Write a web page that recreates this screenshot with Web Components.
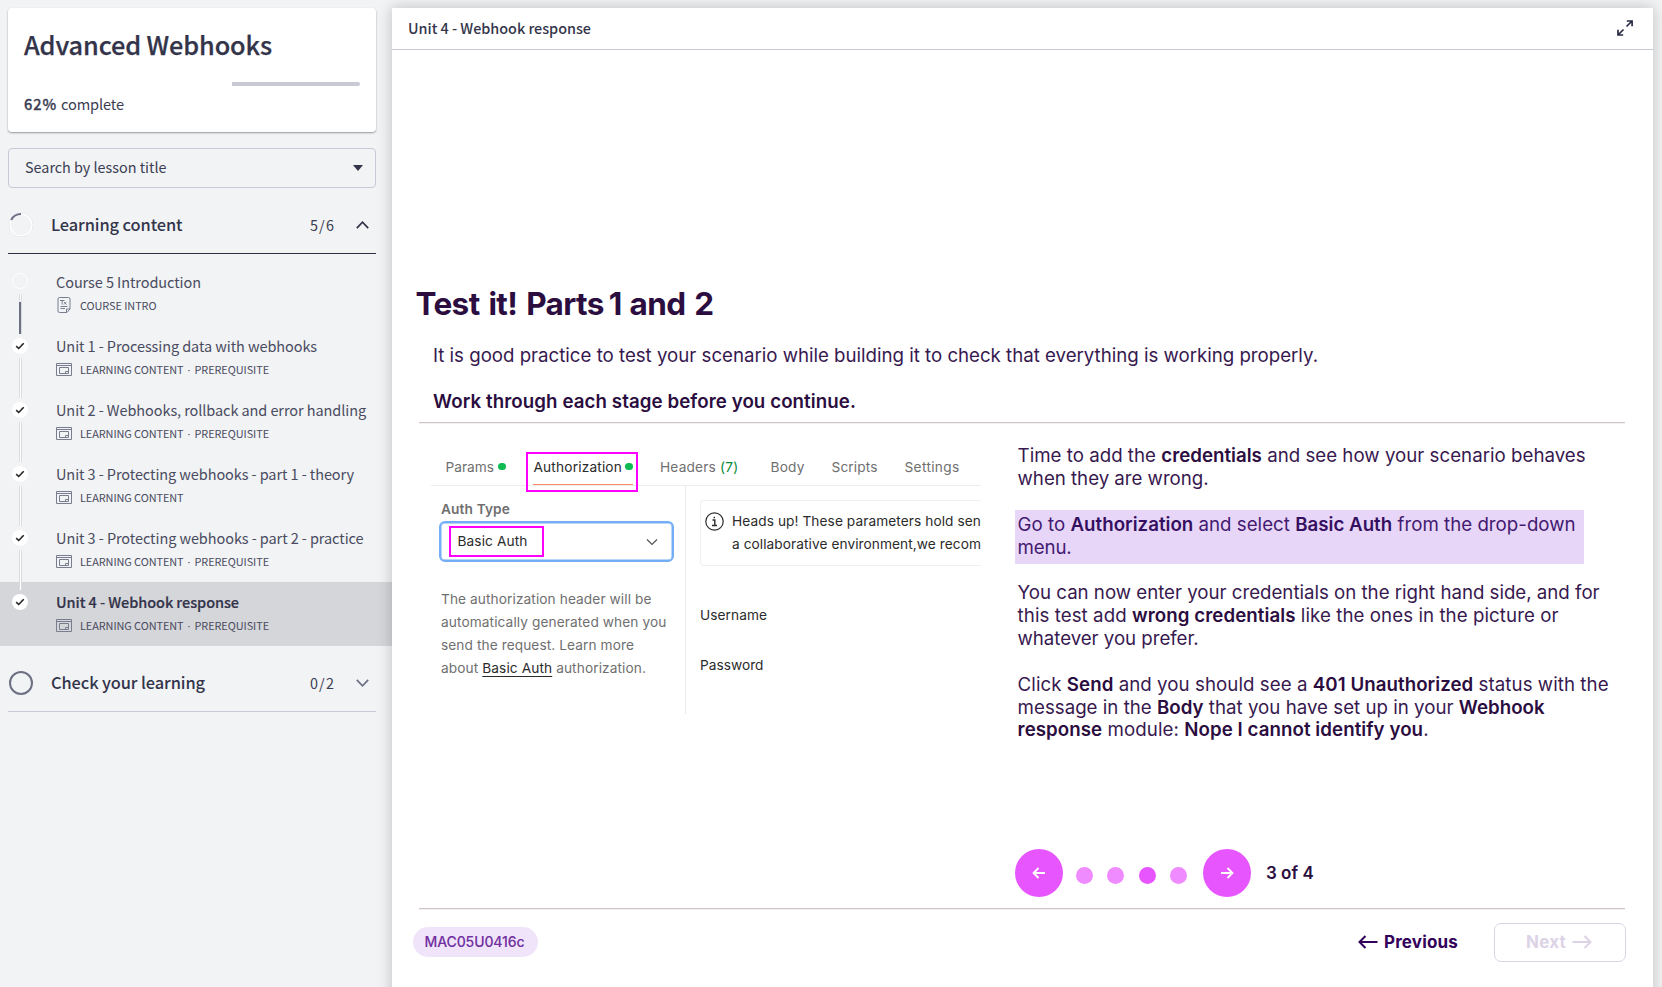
<!DOCTYPE html>
<html lang="en">
<head>
<meta charset="utf-8">
<title>Advanced Webhooks</title>
<style>
html,body{margin:0;height:100%;overflow:hidden;background:#f1f3f5}
</style>
</head>
<body>
<course-app></course-app>
<script>
const define = (name, css, html, init) => customElements.define(name, class extends HTMLElement {
  connectedCallback() {
    if (this.shadowRoot) return;
    const root = this.attachShadow({ mode: 'open' });
    root.innerHTML = `<style>*{box-sizing:border-box}${css}</style>${typeof html === 'function' ? html(this) : html}`;
    if (init) init(this, root);
  }
});

/* One line of text, tracked so that it fills the width given in "w". */
define('fit-text', ':host{display:block;white-space:nowrap;flex:none}span{display:inline-block}', '<span><slot></slot></span>', (el, root) => {
  const w = +el.getAttribute('w');
  if (!w) return;
  el.style.width = w + 'px';
  const n = el.textContent.length;
  const have = root.querySelector('span').getBoundingClientRect().width;
  el.style.letterSpacing = ((w - have) / n).toFixed(4) + 'px';
});

define('progress-card', `
:host{display:block;height:124px;background:#fff;border-radius:4px;padding:19px 16px 0;box-shadow:0 1px 2px rgba(0,0,0,.38)}
.title{font-size:25.3px;font-weight:500;line-height:34px;color:#33344a;-webkit-text-stroke:.25px}
.bar{height:4px;margin-top:21px;display:flex;justify-content:flex-end}
.bar i{width:128px;background:#c9c9d6;border-radius:0 2px 2px 0}
.done{display:flex;font-size:14.6px;line-height:24px;margin-top:6px;gap:4px}
b{font-weight:500;-webkit-text-stroke:.3px}`, `
<fit-text class="title" w="248">Advanced Webhooks</fit-text>
<div class="bar"><i></i></div>
<div class="done"><fit-text w="33"><b>62%</b></fit-text><fit-text w="63">complete</fit-text></div>`);

define('lesson-search', `
:host{display:flex;align-items:center;justify-content:space-between;height:40px;margin-top:16px;border:1px solid #c8c9d8;border-radius:4px;padding:0 12px 0 16px;font-size:14.4px;line-height:20px}
svg{display:block}fit-text{margin-top:-2px}`, `
<fit-text w="141.500">Search by lesson title</fit-text>
<svg width="10" height="6"><path d="M0 0h10L5 6z" fill="#33344a"/></svg>`);

define('section-head', `
:host{display:flex;align-items:center;height:66px;border-bottom:1px solid var(--rule,#c8c9d8);padding:8px 0 0 1px}
svg{flex:none}
.t{margin:-2px auto 0 18px;font-size:16.4px;font-weight:500;line-height:24px;color:#33344a}
.n{font-size:14.4px;line-height:20px;margin-right:21px}
.chev{margin-right:7px}`, el => `
<svg width="24" height="24" viewBox="0 0 24 24" fill="none">${el.hasAttribute('open')
  ? '<circle cx="12" cy="12" r="11.5" stroke="#c6c8ce" stroke-width="1"/><circle cx="12" cy="12" r="11" stroke="#fff" stroke-width="1.5"/><path d="M2.2 7A11 11 0 0 1 12 1" stroke="#6d7084" stroke-width="2"/>'
  : '<circle cx="12" cy="12" r="11" stroke="#6d7084" stroke-width="2"/>'}</svg>
<fit-text class="t" w="${el.getAttribute('w')}">${el.getAttribute('label')}</fit-text>
<fit-text class="n" w="25">${el.getAttribute('count')}</fit-text>
<svg class="chev" width="13" height="8" fill="none" stroke="${el.hasAttribute('open') ? '#33344a' : '#6d7084'}" stroke-width="1.7"><path d="${el.hasAttribute('open') ? 'M.8 7.2l5.7-6 5.7 6' : 'M.8.8l5.7 6 5.7-6'}"/></svg>`);

define('lesson-item', `
:host{display:grid;grid-template-columns:40px 1fr;padding-left:12px;height:64px;color:#4a4b60}
:host([active]){background:#d5d6da}
:host([active]) .t{font-weight:500;color:#33344a;-webkit-text-stroke:.2px}
.rail{display:flex;flex-direction:column;width:16px;padding-top:12px;overflow:visible}
.dot{flex:none;width:16px;height:16px;border-radius:50%;background:#fff}
.dot svg{display:block}
.dot.empty{background:none;border:1px solid #fff;margin-top:-1px;margin-bottom:1px}
.line{position:relative;z-index:1;flex:none;width:3px;height:40px;margin:4px 0 0 7px;background:#fff;border:solid #d9dbdf;border-width:0 1px}
.line.part{border:0;background:linear-gradient(90deg,#d9dbdf 1px,#fff 1px 2px,#d9dbdf 2px) 0 0/3px 8px no-repeat,linear-gradient(90deg,#6d7084 2px,#d9dbdf 2px) 0 8px/3px 32px no-repeat}
.b{padding:9px 0 0 4px}
.t{font-size:14.5px;line-height:22px}
.m{display:flex;align-items:center;font-size:10.9px;line-height:16px;margin-top:3px}
.i{width:24px;display:block;height:18px}
.i svg{display:block}
.sep{width:11px;text-align:center;font-family:"Open Sans",sans-serif;margin-top:1px}`, el => {
  const intro = el.hasAttribute('intro');
  const bits = [];
  if (intro) bits.push('<fit-text w="76.500">COURSE INTRO</fit-text>');
  else bits.push('<fit-text w="103.5">LEARNING CONTENT</fit-text>');
  if (el.hasAttribute('pre')) bits.push('<span class="sep">·</span><fit-text w="74.500">PREREQUISITE</fit-text>');
  return `<div class="rail">
  <div class="dot ${intro ? 'empty' : ''}">${intro ? '' : '<svg width="16" height="16" fill="none" stroke="#222" stroke-width="1.6"><path d="M4.2 8.2l2.5 2.3 5-5.2"/></svg>'}</div>
  ${el.hasAttribute('active') ? '' : `<div class="line ${intro ? 'part' : ''}"></div>`}</div>
  <div class="b"><fit-text class="t" w="${el.getAttribute('w')}">${el.textContent}</fit-text>
  <div class="m"><span class="i">${intro
  ? '<svg width="16" height="18" fill="none" stroke="#7b7d8f"><path d="M3.500 1.500h9q1.500 0 1.500 1.500v10l-3 3.500H3.500q-1.500 0-1.500-1.500V3q0-1.500 1.500-1.500M10.500 16v-3h3.500M4 4.500h4.500M6.200 4.500v4M8 6l2.500 2.500M10.500 6L8 8.500M4.500 10.500h7M4.500 12.500h4.500"/></svg>'
  : '<svg width="16" height="18" fill="none" stroke="#7b7d8f"><path d="M.5 3.500h15v12H.5zM.5 5.500h15M3.500 7.500h9v6h-9zM9.500 13v-1.500h3"/></svg>'}</span>${bits.join('')}</div></div>`;
});

define('course-sidebar', `
:host{display:block;width:392px;padding-top:8px;font-family:"Noto Sans CJK SC","Source Sans Pro",sans-serif;color:#3c3d52}
.pad{padding:0 16px 0 8px}
.open{--rule:#2d2f40}
.list{padding:8px 0 0}`, `
<div class="pad"><progress-card></progress-card><lesson-search></lesson-search>
<section-head class="open" open label="Learning content" count="5/6" w="131.500"></section-head></div>
<div class="list">
<lesson-item intro w="145">Course 5 Introduction</lesson-item>
<lesson-item pre w="261">Unit 1 - Processing data with webhooks</lesson-item>
<lesson-item pre w="310">Unit 2 - Webhooks, rollback and error handling</lesson-item>
<lesson-item w="298">Unit 3 - Protecting webhooks - part 1 - theory</lesson-item>
<lesson-item pre w="307.500">Unit 3 - Protecting webhooks - part 2 - practice</lesson-item>
<lesson-item active pre w="183">Unit 4 - Webhook response</lesson-item>
</div>
<div class="pad"><section-head label="Check your learning" count="0/2" w="154"></section-head></div>`);

define('panel-header', `
:host{display:flex;justify-content:space-between;align-items:center;height:42px;border-bottom:1px solid #c9cad3;padding:0 19px 0 16px;font:500 14.4px/20px "Noto Sans CJK SC",sans-serif;color:#33344a}
fit-text{margin-top:-1px}svg{margin-top:-1px}`, `
<fit-text w="183">Unit 4 - Webhook response</fit-text>
<svg width="18" height="18" fill="none" stroke="#2a2b45" stroke-width="1.700"><path d="M10.500 7.500l5.500-5.500M10.800 2h5.300v5.300M7.500 10.500L2 16M7.200 16H2v-5.200"/></svg>`);

/* Cropped view of the request editor. */
define('request-preview', `
:host{display:block;width:550px;height:266px;margin:25px 0 0 39px;font:13.700px/20px Inter,sans-serif;color:#6f6f6f;overflow:hidden}
.tabs{display:flex;align-items:center;height:38px;border-bottom:1px solid #ededed;padding-left:14.500px}
.dot{width:8px;height:7px;border-radius:4px;background:#0cbb52;flex:none}
.auth{position:relative;z-index:1;display:flex;align-items:center;gap:4px;width:112px;height:40px;margin:11px 22px 0 20px;border:2px solid #f0f;padding:0 0 11px 5.500px;color:#2b2b2b;flex:none}
.auth::after{content:"";position:absolute;left:5px;bottom:5px;width:100px;height:1px;background:#ff8a65}
.green{color:#0a8a3a}
.cols{display:grid;grid-template-columns:255px 1fr;height:228px}
.l{border-right:1px solid #ededed;padding:13px 0 0 8px}
.lab{font-weight:600;margin-left:2px}
.sel{width:235px;height:41px;margin:2px 0 25.500px -.5px;border:2px solid #74aef6;box-shadow:inset 0 0 0 .5px #74aef6;border-radius:6px;display:flex;align-items:center;justify-content:space-between;padding:0 14px 0 8px;color:#2b2b2b}
.mark{width:95px;height:31px;border:2px solid #f0f;padding:3px 0 0 7px}
.p{line-height:23px;margin-left:2px}
u{color:#2b2b2b;text-underline-offset:3px}
.r{padding:14px 0 0 14px;color:#2b2b2b;min-width:0}
.alert{height:66px;border:1px solid #efefef;border-right:0;border-radius:4px 0 0 4px;padding:9px 0 0 4px;display:flex;gap:8px;line-height:23px;margin-bottom:39px}
.alert svg{margin-top:1.500px;flex:none}`, `
<div class="tabs"><fit-text w="48.500" style="margin-right:4px">Params</fit-text><i class="dot"></i>
<div class="auth"><fit-text w="88.500">Authorization</fit-text><i class="dot" style="margin-left:-1px"></i></div>
<fit-text w="56" style="margin-right:4px">Headers</fit-text><fit-text w="18.500" class="green" style="margin-right:32px">(7)</fit-text>
<fit-text w="34" style="margin-right:27px">Body</fit-text><fit-text w="46" style="margin-right:27px">Scripts</fit-text><fit-text w="55">Settings</fit-text></div>
<div class="cols"><div class="l"><fit-text class="lab" w="69">Auth Type</fit-text>
<div class="sel"><div class="mark"><fit-text w="70">Basic Auth</fit-text></div><svg width="12" height="8" fill="none" stroke="#555" stroke-width="1.200"><path d="M1 1.500l5 5 5-5"/></svg></div>
<div class="p"><fit-text w="210.500">The authorization header will be</fit-text><fit-text w="225.500">automatically generated when you</fit-text><fit-text w="193">send the request. Learn more</fit-text><fit-text w="205">about <u>Basic Auth</u> authorization.</fit-text></div></div>
<div class="r"><div class="alert"><svg width="19" height="19" fill="none" stroke="#2b2b2b" stroke-width="1.200"><circle cx="9.500" cy="9.500" r="8.700"/><path d="M7.500 8h2.300v5.500M7 13.500h5M9.300 4.800v1.500" stroke-width="1.400"/></svg>
<div><fit-text w="249">Heads up! These parameters hold sen</fit-text><fit-text w="249">a collaborative environment,we recom</fit-text></div></div>
<fit-text w="67">Username</fit-text><fit-text w="63.500" style="margin-top:30px">Password</fit-text></div></div>`);

define('step-copy', `
:host{display:block;margin:22px 0 0 34px;font-size:18.700px;line-height:22.850px;width:600px;color:#37194f}
div{padding-left:2.600px}
b{font-weight:600;color:#2b0d40}
.hl{background:#e7d6f8;width:569px;height:54px;margin:19px 0 18.500px;padding-top:4px;color:#431a70}
.hl b{color:#350f60}
.g{margin-top:23px}`, `
<div><fit-text w="568">Time to add the <b>credentials</b> and see how your scenario behaves</fit-text><fit-text w="191">when they are wrong.</fit-text></div>
<div class="hl"><fit-text w="558">Go to <b>Authorization</b> and select <b>Basic Auth</b> from the drop-down</fit-text><fit-text w="54">menu.</fit-text></div>
<div><fit-text w="582">You can now enter your credentials on the right hand side, and for</fit-text><fit-text w="541">this test add <b>wrong credentials</b> like the ones in the picture or</fit-text><fit-text w="181">whatever you prefer.</fit-text></div>
<div class="g"><fit-text w="591">Click <b>Send</b> and you should see a <b>401 Unauthorized</b> status with the</fit-text><fit-text w="527">message in the <b>Body</b> that you have set up in your <b>Webhook</b></fit-text><fit-text w="411"><b>response</b> module: <b>Nope I cannot identify you</b>.</fit-text></div>`);

define('slide-nav', `
:host{display:flex;align-items:center;height:48px;margin-left:623px;color:#2b0d40;font-size:17px;font-weight:600;line-height:24px}
.btn{width:48px;height:48px;border-radius:50%;background:#e755ff;display:grid;place-items:center}
.dots{display:flex;gap:14.300px;margin:4px 16.500px 0 13px}
.dots i{width:17px;height:17px;border-radius:50%;background:#ef8aff}
.dots i.on{background:#e755ff}
fit-text{margin-left:14.500px}`, `
<span class="btn"><svg width="14" height="12" fill="none" stroke="#fff" stroke-width="1.800"><path d="M13 6H1.500M6.500 1l-5 5 5 5"/></svg></span>
<span class="dots"><i></i><i></i><i class="on"></i><i></i></span>
<span class="btn"><svg width="14" height="12" fill="none" stroke="#fff" stroke-width="1.800"><path d="M1 6h11.500M7.500 1l5 5-5 5"/></svg></span>
<fit-text w="48">3 of 4</fit-text>`);

define('lesson-footer', `
:host{display:flex;align-items:center;height:39px;margin:14px 27px 0 21px;font-size:17px;font-weight:700;line-height:24px;color:#33005a}
.id{width:125px;height:30px;border-radius:15px;background:#f0e4fb;color:#7030a0;font-size:14px;font-weight:500;-webkit-text-stroke:.1px;line-height:30px;padding-left:11.500px;margin:-1px auto 0 0}
.prev,.next{display:flex;align-items:center;gap:6px}
.prev{margin-top:-1px}
.next{width:132px;height:39px;border:1.500px solid #ddd3e6;border-radius:7px;color:#ddd3e6;margin:-1px 0 0 36px;padding-left:31px}`, `
<div class="id"><fit-text w="100">MAC05U0416c</fit-text></div>
<div class="prev"><svg width="20" height="14" fill="none" stroke="currentColor" stroke-width="2"><path d="M19.500 7h-18M7.500 1l-6 6 6 6"/></svg><fit-text w="74">Previous</fit-text></div>
<div class="next"><fit-text w="40">Next</fit-text><svg width="20" height="14" fill="none" stroke="currentColor" stroke-width="2"><path d="M.5 7h18M12.500 1l6 6-6 6"/></svg></div>`);

define('lesson-panel', `
:host{display:block;background:#fff;box-shadow:0 0 14px rgba(0,0,0,.22);font-family:Inter,sans-serif;color:#2b0d40}
.h{font-size:31.500px;font-weight:700;line-height:40px;margin:234px 0 0 23.500px;word-spacing:2px}
.h span{word-spacing:1px}.h i{font-style:normal;word-spacing:-2px}
.p{font-size:18.700px;line-height:24px;margin:20px 0 0 41px;color:#37194f}
.w{font-size:18.700px;font-weight:600;line-height:24px;margin:22px 0 0 41px}
hr{height:1px;border:0;background:#cfc6c8;box-shadow:0 1px #f3efef;margin:0 28px 0 27px}
.cols{display:grid;grid-template-columns:589px 1fr;height:426px}`, `
<panel-header></panel-header>
<fit-text class="h" w="298">Test it! Parts<i> </i>1<span> </span>and 2</fit-text>
<fit-text class="p" w="885">It is good practice to test your scenario while building it to check that everything is working properly.</fit-text>
<fit-text class="w" w="423">Work through each stage before you continue.</fit-text>
<hr style="margin-top:8px">
<div class="cols"><request-preview></request-preview><step-copy></step-copy></div>
<slide-nav></slide-nav>
<hr style="margin-top:11px">
<lesson-footer></lesson-footer>`);

define('course-app', `
:host{display:grid;grid-template-columns:392px 1fr;height:100vh;background:#f1f3f5;overflow:hidden}
lesson-panel{margin:8px 9px -20px 0}`, `<course-sidebar></course-sidebar><lesson-panel></lesson-panel>`);
</script>
</body>
</html>
